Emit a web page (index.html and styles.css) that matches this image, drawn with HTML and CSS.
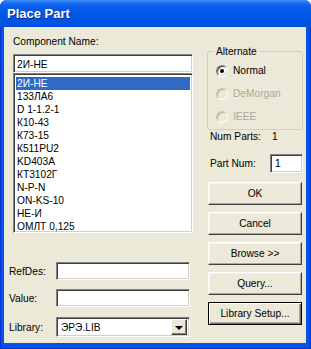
FILE: index.html
```html
<!DOCTYPE html>
<html lang="en">
<head>
  <meta charset="UTF-8" />
  <title>Place Part</title>
  <link rel="stylesheet" href="styles.css">
</head>
<body>
  <div class="window">
    <div class="titlebar">Place Part</div>

    <div class="client">
      <div class="left">
        <div class="name-block">
          <div class="label">Component Name:</div>
          <div class="textbox name-input">2И-НЕ</div>
          <ul class="listbox">
            <li class="selected">2И-НЕ</li>
            <li>133ЛА6</li>
            <li>D 1-1.2-1</li>
            <li>К10-43</li>
            <li>К73-15</li>
            <li>К511PU2</li>
            <li>KD403A</li>
            <li>КТ3102Г</li>
            <li>N-P-N</li>
            <li>ON-KS-10</li>
            <li>НЕ-И</li>
            <li>ОМЛТ 0,125</li>
          </ul>
        </div>

        <div class="field-row refdes">
          <span class="field-label">RefDes:</span>
          <div class="textbox field-input"></div>
        </div>
        <div class="field-row value">
          <span class="field-label">Value:</span>
          <div class="textbox field-input"></div>
        </div>
        <div class="field-row library">
          <span class="field-label">Library:</span>
          <div class="textbox combo">
            <span class="combo-text">ЭРЭ.LIB</span>
            <span class="combo-btn"><span class="arrow"></span></span>
          </div>
        </div>
      </div>

      <div class="right">
        <div class="group">
          <span class="legend">Alternate</span>
          <div class="radio-row"><span class="radio checked"></span>Normal</div>
          <div class="radio-row disabled"><span class="radio"></span>DeMorgan</div>
          <div class="radio-row disabled"><span class="radio"></span>IEEE</div>
        </div>

        <div class="info-row">
          <span class="info-label">Num Parts:</span>
          <span>1</span>
        </div>
        <div class="info-row partnum">
          <span class="info-label">Part Num:</span>
          <div class="textbox small-input">1</div>
        </div>

        <div class="buttons">
          <div class="btn">OK</div>
          <div class="btn">Cancel</div>
          <div class="btn">Browse &gt;&gt;</div>
          <div class="btn">Query...</div>
          <div class="btn default">Library Setup...</div>
        </div>
      </div>
    </div>
  </div>
</body>
</html>
```

FILE: styles.css
```css
* { margin: 0; padding: 0; box-sizing: border-box; }
body {
  font-family: 'Liberation Sans', Arial, sans-serif;
  font-size: 10.2px;
  color: #000;
  background: #fff;
}
.window {
  width: 311px;
  height: 349px;
  background: #0055e5;
  border-radius: 7px 7px 0 0;
  display: flex;
  flex-direction: column;
  padding: 0 5px 6px 4px;
  box-shadow: inset 1px 0 0 #0831d9, inset -1px 0 0 #0831d9, inset 0 -1px 0 #0831d9;
}
.titlebar {
  height: 27px;
  margin: 0 -5px 0 -4px;
  padding: 0 7px;
  border-radius: 7px 7px 0 0;
  background: linear-gradient(to bottom, #3e93ff 0, #1a6cf0 3px, #0a5ee8 7px, #0058e6 14px, #0054e3 22px, #0050dc 27px);
  color: #fff;
  font-weight: bold;
  font-size: 13px;
  line-height: 28px;
  text-shadow: 1px 1px 0 #0a2a8a;
}
.client {
  flex: 1;
  background: #ece9d8;
  display: flex;
  padding: 8px 0 0 5px;
}

/* left column */
.left {
  width: 185px;
  display: flex;
  flex-direction: column;
}
.name-block {
  padding-left: 4px;
}
.label {
  line-height: 13px;
  height: 13px;
  margin-bottom: 6px;
}
.textbox {
  background: #fff;
  border: 1px solid;
  border-color: #808080 #fff #fff #808080;
  box-shadow: inset 1px 1px 0 #404040, inset -1px -1px 0 #d4d0c8;
}
.name-input {
  width: 180px;
  height: 19px;
  padding: 3px 3px;
  line-height: 13px;
}
.listbox {
  list-style: none;
  width: 180px;
  height: 160px;
  padding: 3px 2px;
  overflow: hidden;
  background: #fff;
  border: 1px solid;
  border-color: #808080 #fff #fff #808080;
  box-shadow: inset 1px 1px 0 #404040, inset -1px -1px 0 #d4d0c8;
}
.listbox li {
  height: 13px;
  line-height: 13px;
  padding-left: 1px;
}
.listbox li.selected {
  background: #316ac5;
  color: #fff;
}
.field-row {
  display: flex;
  align-items: center;
}
.refdes { margin-top: 29px; }
.value { margin-top: 9px; }
.library { margin-top: 10px; }
.field-label {
  width: 47px;
}
.field-input {
  width: 134px;
  height: 18px;
}
.combo {
  width: 134px;
  height: 20px;
  display: flex;
  align-items: center;
  justify-content: space-between;
  padding: 2px 2px 2px 4px;
}
.combo-btn {
  width: 16px;
  height: 16px;
  background: #ece9d8;
  border: 1px solid;
  border-color: #fff #404040 #404040 #fff;
  box-shadow: inset -1px -1px 0 #808080;
  display: flex;
  align-items: center;
  justify-content: center;
}
.arrow {
  width: 0;
  height: 0;
  border-left: 4px solid transparent;
  border-right: 4px solid transparent;
  border-top: 4px solid #000;
  margin-top: 1px;
}

/* right column */
.right {
  margin-left: 13px;
  width: 96px;
  display: flex;
  flex-direction: column;
  padding-top: 16px;
}
.group {
  position: relative;
  border: 1px solid #d0d0bf;
  border-radius: 3px;
  height: 79px;
  padding: 7px 0 0 8px;
}
.legend {
  position: absolute;
  top: -7px;
  left: 6px;
  padding: 0 2px;
  background: #ece9d8;
  line-height: 13px;
}
.radio-row {
  height: 23px;
  display: flex;
  align-items: center;
  gap: 5px;
}
.radio-row.disabled {
  color: #aca899;
}
.radio {
  width: 12px;
  height: 12px;
  border-radius: 50%;
  background: #fff;
  border: 1px solid;
  border-color: #808080 #fff #fff #808080;
  box-shadow: inset 1px 1px 0 #404040, inset -1px -1px 0 #d4d0c8;
  position: relative;
}
.radio-row.disabled .radio {
  background: #ece9d8;
  border-color: #c8c4b0 #fff #fff #c8c4b0;
  box-shadow: inset 1px 1px 0 #b8b4a0;
}
.radio.checked::after {
  content: "";
  position: absolute;
  left: 3px;
  top: 3px;
  width: 4px;
  height: 4px;
  border-radius: 50%;
  background: #000;
}
.info-row {
  display: flex;
  align-items: center;
  padding-left: 3px;
  line-height: 13px;
}
.info-row:first-of-type { margin-top: 11px; }
.info-label { width: 62px; }
.partnum { margin-top: 11px; }
.small-input {
  width: 34px;
  height: 19px;
  padding: 2px 4px;
  line-height: 13px;
  font-size: 11px;
}
.buttons {
  margin-top: 9px;
  display: flex;
  flex-direction: column;
  gap: 7px;
  padding-left: 1px;
}
.btn {
  width: 94px;
  height: 23px;
  display: flex;
  align-items: center;
  justify-content: center;
  background: #ece9d8;
  border: 1px solid;
  border-color: #fff #404040 #404040 #fff;
  box-shadow: inset -1px -1px 0 #aca899, inset 1px 1px 0 #f5f4ea;
}
.btn.default {
  outline: 1px solid #000;
  outline-offset: -1px;
  border-color: #000;
  box-shadow: inset 1px 1px 0 #fff, inset -1px -1px 0 #716f64, inset -2px -2px 0 #aca899;
}
```
